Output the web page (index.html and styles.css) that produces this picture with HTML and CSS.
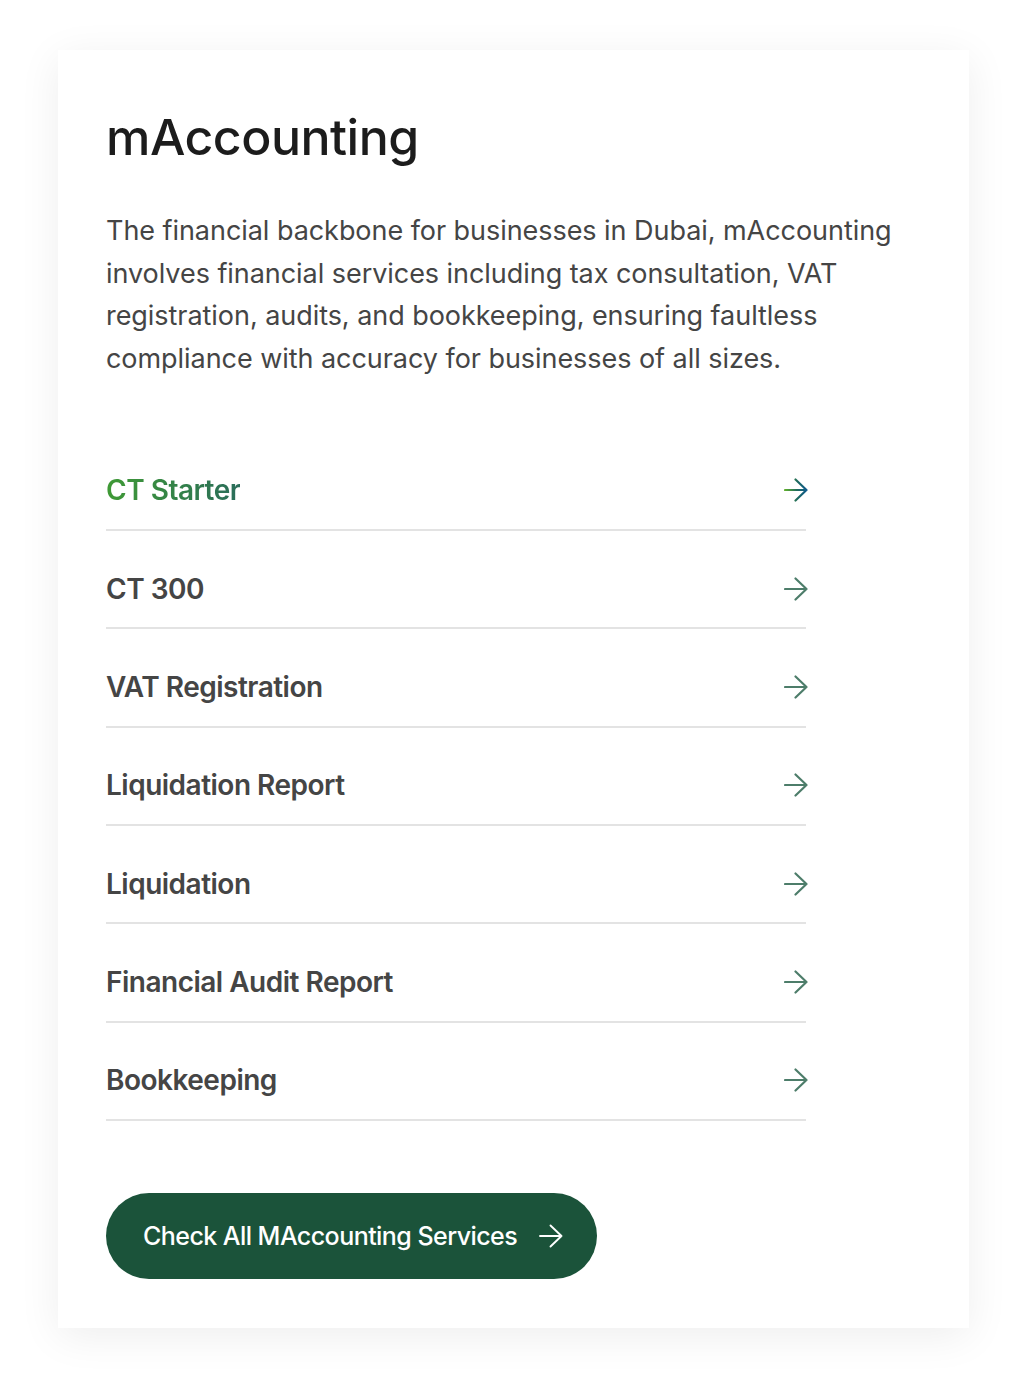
FILE: index.html
```html
<!DOCTYPE html>
<html lang="en">
<head>
    <meta charset="UTF-8">
    <meta name="viewport" content="width=device-width, initial-scale=1.0">
    <title>mAccounting</title>
    <link rel="stylesheet" href="styles.css">
</head>
<body>

    <div class="card">
        <h1 class="title">mAccounting</h1>
        <p class="intro">The financial backbone for businesses in Dubai, mAccounting involves financial services including tax consultation, VAT registration, audits, and bookkeeping, ensuring faultless compliance with accuracy for businesses of all sizes.</p>

        <ul class="services">
            <li class="service active">
                <a href="#"><span class="name">CT Starter</span>
                    <svg class="arrow" width="24" height="24" viewBox="0 0 24 24" fill="none">
                        <defs>
                            <linearGradient id="arrowGrad" x1="0" y1="0" x2="1" y2="0">
                                <stop offset="0" stop-color="#5fae2e"/>
                                <stop offset="0.55" stop-color="#1f6a5c"/>
                                <stop offset="1" stop-color="#0d5a8c"/>
                            </linearGradient>
                        </defs>
                        <path d="M1 12h21.5M11.5 1.5L22.5 12 11.5 22.5" stroke="url(#arrowGrad)" stroke-width="2.2" stroke-linecap="round" stroke-linejoin="round"/>
                    </svg>
                </a>
            </li>
            <li class="service"><a href="#"><span class="name">CT 300</span><svg class="arrow" width="24" height="24" viewBox="0 0 24 24" fill="none"><path d="M1 12h21.5M11.5 1.5L22.5 12 11.5 22.5" stroke="currentColor" stroke-width="2.2" stroke-linecap="round" stroke-linejoin="round"/></svg></a></li>
            <li class="service"><a href="#"><span class="name">VAT Registration</span><svg class="arrow" width="24" height="24" viewBox="0 0 24 24" fill="none"><path d="M1 12h21.5M11.5 1.5L22.5 12 11.5 22.5" stroke="currentColor" stroke-width="2.2" stroke-linecap="round" stroke-linejoin="round"/></svg></a></li>
            <li class="service"><a href="#"><span class="name">Liquidation Report</span><svg class="arrow" width="24" height="24" viewBox="0 0 24 24" fill="none"><path d="M1 12h21.5M11.5 1.5L22.5 12 11.5 22.5" stroke="currentColor" stroke-width="2.2" stroke-linecap="round" stroke-linejoin="round"/></svg></a></li>
            <li class="service"><a href="#"><span class="name">Liquidation</span><svg class="arrow" width="24" height="24" viewBox="0 0 24 24" fill="none"><path d="M1 12h21.5M11.5 1.5L22.5 12 11.5 22.5" stroke="currentColor" stroke-width="2.2" stroke-linecap="round" stroke-linejoin="round"/></svg></a></li>
            <li class="service"><a href="#"><span class="name">Financial Audit Report</span><svg class="arrow" width="24" height="24" viewBox="0 0 24 24" fill="none"><path d="M1 12h21.5M11.5 1.5L22.5 12 11.5 22.5" stroke="currentColor" stroke-width="2.2" stroke-linecap="round" stroke-linejoin="round"/></svg></a></li>
            <li class="service"><a href="#"><span class="name">Bookkeeping</span><svg class="arrow" width="24" height="24" viewBox="0 0 24 24" fill="none"><path d="M1 12h21.5M11.5 1.5L22.5 12 11.5 22.5" stroke="currentColor" stroke-width="2.2" stroke-linecap="round" stroke-linejoin="round"/></svg></a></li>
        </ul>

        <a href="#" class="cta">Check All MAccounting Services
            <svg width="24" height="24" viewBox="0 0 24 24" fill="none"><path d="M1 12h21.5M11.5 1.5L22.5 12 11.5 22.5" stroke="currentColor" stroke-width="1.9" stroke-linecap="round" stroke-linejoin="round"/></svg>
        </a>
    </div>

</body>
</html>
```

FILE: styles.css
```css
* {
    margin: 0;
    padding: 0;
    box-sizing: border-box;
}

body {
    font-family: Inter, "Noto Sans", Arial, sans-serif;
    background: #ffffff;
    padding: 50px 57px 64px 58px;
}

.card {
    background: #ffffff;
    height: 1278px;
    padding: 57px 48px 0 48px;
    box-shadow: 0 8px 40px rgba(0, 0, 0, 0.07);
}

.title {
    font-size: 50px;
    font-weight: 500;
    color: #1c1c1c;
    line-height: 60px;
    letter-spacing: -0.5px;
}

.intro {
    margin-top: 43px;
    font-size: 27px;
    line-height: 42.7px;
    color: #454545;
    letter-spacing: -0.05px;
    max-width: 800px;
}

.services {
    list-style: none;
    width: 700px;
    margin-top: 52px;
}

.service a {
    display: flex;
    align-items: center;
    justify-content: space-between;
    height: 98.3px;
    padding-top: 19px;
    border-bottom: 2px solid #e3e3e3;
    text-decoration: none;
    color: #4d7d6a;
}

.service .name {
    font-size: 28px;
    font-weight: 600;
    color: #454545;
    letter-spacing: -0.5px;
}

.service .arrow {
    margin-right: -2px;
}

.service.active .name {
    background: linear-gradient(90deg, #3f9a35, #2a6d5a);
    -webkit-background-clip: text;
    background-clip: text;
    color: transparent;
}

.cta {
    display: inline-flex;
    align-items: center;
    gap: 22px;
    margin-top: 72px;
    height: 86px;
    padding: 0 34px 0 37px;
    border-radius: 43px;
    background: #1b533a;
    color: #ffffff;
    font-size: 25px;
    font-weight: 500;
    letter-spacing: -0.55px;
    text-decoration: none;
}
```
